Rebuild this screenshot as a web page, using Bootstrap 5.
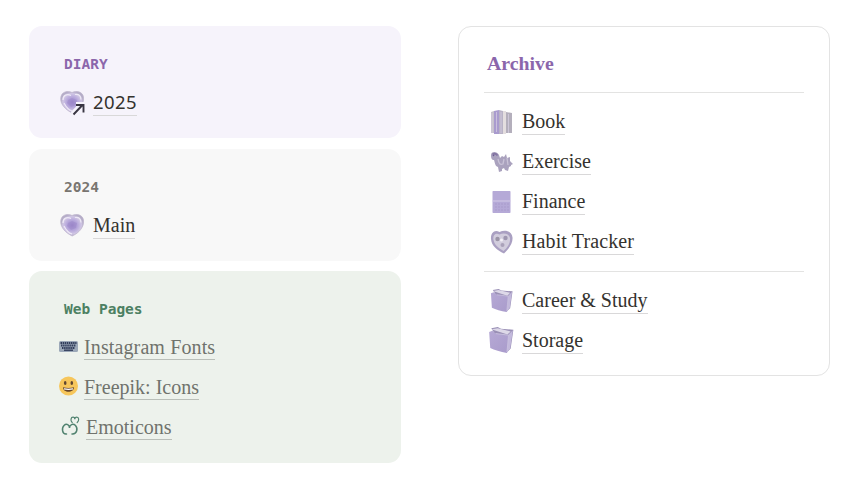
<!DOCTYPE html>
<html lang="en">
<head>
<meta charset="utf-8">
<meta name="viewport" content="width=device-width, initial-scale=1">
<title>Diary and archive</title>
<link href="https://cdn.jsdelivr.net/npm/bootstrap@5.3.0/dist/css/bootstrap.min.css" rel="stylesheet">
<style>
body{background:#fff;font-family:"Liberation Serif",serif;overflow:hidden}
.page{padding:26px 32px 0 29px;gap:57px}
.column{width:372px}
.panel{border-radius:13px;padding:24px 32px 0 35px}
.diary{background:#f6f3fb;height:112px}
.year{background:#f8f8f8;height:112px;margin-top:11px}
.web{background:#edf2ec;height:192px;margin-top:10px}
.heading{font:bold 14.5px/28px "DejaVu Sans Mono",monospace;margin:0 0 4px}
.diary .heading,.archive h2{color:#8b66ab}
.year .heading{color:#787570}
.web .heading{color:#4c8062}
.entry{height:40px;margin-left:-6px}
.entry svg{flex:none}
.label{font-size:20px;line-height:26px;color:#34322e;text-decoration:none;border-bottom:1px solid #d9d8d9;white-space:nowrap}
.web .label{line-height:24px;color:#70736d;border-color:#babfb9}
.label.year-label{font-family:"Noto Sans",sans-serif;font-size:18.5px;line-height:26px;letter-spacing:.45px}
.archive{height:350px;border:1px solid #e3e3e3;border-radius:13px;padding:21px 25px 0}
.archive h2{font:bold 19.8px/31px "Liberation Serif",serif;margin:0 0 13px 3px}
.rule{height:1px;background:#e3e3e2}
.rule-lower{margin-top:10px}
.archive .entry{margin-left:3px}
.icon-slot{width:35px;flex:none}
.roomy{letter-spacing:.12px}
</style>
</head>
<body>
<svg width="0" height="0" class="position-absolute" aria-hidden="true">
<defs>
<radialGradient id="gem"><stop offset="0" stop-color="#9c86c9"/><stop offset=".5" stop-color="#b8a9dc"/><stop offset=".8" stop-color="#d0c6e4"/><stop offset="1" stop-color="#b5adc8"/></radialGradient>
<linearGradient id="lilac" x2="1" y2="1"><stop stop-color="#b6a9d5"/><stop offset="1" stop-color="#a99bcb"/></linearGradient>
<symbol id="heart" viewBox="0 0 24 23"><path d="M12 1.500C8-.6 1 .3.700 7.500c-.2 6 5 11.500 11.500 14.500C19 19 24 13 23.600 7 23.300.3 16-.5 12 1.500Z" fill="url(#gem)" stroke="#bdb3cc" stroke-width=".7"/><path d="M3 9C3 4 7 2.500 11 4.500M15 3.500c4-1 6 2 6 5M4 12c2 4 5 7 8 8" fill="none" stroke="#eee9f6" stroke-width="1.200"/><path d="m8 9 4-2 5 2-1 5-5 2-4-4Z" fill="#9a86c8" opacity=".45"/></symbol>
<symbol id="folder" viewBox="0 0 26 26"><path d="m4 2 6-1 3 1.500 11.500 1L22 21l-4 4Z" fill="#9a90b6"/><path d="m4 3 6-1 12 3-3 3Z" fill="#ddd8e8"/><path d="m20 8 4-4-2.500 17-3.500 4Z" fill="#c3b9dc"/><path d="m2 5.500 3-1 3 2.500 12 1.500-1.500 16.500Q9 23.500 3 20.500Z" fill="url(#lilac)"/><path d="m8 7 12 1.500-1.500 16" fill="none" stroke="#cbc3df" stroke-width=".8"/></symbol>
</defs>
</svg>
<main class="page d-flex align-items-start">
<div class="column">
<section class="panel diary"><h2 class="heading">DIARY</h2>
<div class="entry d-flex align-items-center"><div class="icon-slot d-flex"><svg width="28" height="28" viewBox="0 0 28 28"><use href="#heart" x="2" y="3" width="24" height="23"/><path d="m14.500 26 9.500-10M18 16.500h7.500v8.500" fill="none" stroke="#f6f3fb" stroke-width="5"/><path d="m15.500 26.500 9-9.500M18 17h7.500v7.500" fill="none" stroke="#393642" stroke-width="1.900"/></svg></div><a class="label year-label" href="#">2025</a></div></section>
<section class="panel year"><h2 class="heading">2024</h2>
<div class="entry d-flex align-items-center"><div class="icon-slot d-flex"><svg width="28" height="28" viewBox="0 0 28 28"><use href="#heart" x="2" y="3" width="24" height="23"/></svg></div><a class="label" href="#">Main</a></div></section>
<section class="panel web"><h2 class="heading">Web Pages</h2>
<div class="entry d-flex align-items-center"><svg width="26" height="22" viewBox="0 0 26 22"><rect x="1" y="5" width="19" height="11" rx="1.500" fill="#9ba8b8"/><path d="M2.500 7h16M3 9.500h15M4 12h13" stroke="#303d5b" stroke-width="1.800" stroke-dasharray="1.500 .6"/><path d="M6 14.200h9" stroke="#303d5b" stroke-width="1.400"/></svg><a class="label roomy" href="#">Instagram Fonts</a></div>
<div class="entry d-flex align-items-center"><svg width="26" height="24" viewBox="0 0 26 24"><circle cx="10.500" cy="11" r="9.500" fill="#f6c65b"/><ellipse cx="7.200" cy="8" rx="1.300" ry="2" fill="#5e4530"/><ellipse cx="13.800" cy="8" rx="1.300" ry="2" fill="#5e4530"/><path d="M5 12.300q5.500 1.300 11 0c0 6-11 6-11 0Z" fill="#65462c"/><path d="M6 13.300q4.500.8 9 0v1.300q-4.500.8-9 0Z" fill="#fff"/></svg><a class="label" href="#">Freepik: Icons</a></div>
<div class="entry d-flex align-items-center"><svg width="28" height="26" viewBox="0 0 28 26"><g fill="none" stroke="#518370" stroke-width="1.500" stroke-linecap="round"><path d="M8.500 20C4 20.500 3.500 14 6 11.500c2.500-2.400 5.500-.8 5.500 2.500 0-3.300 3.500-5 6-2.500 2.700 3 1.500 9-3.500 8.500"/><path d="M14.200 8.500C12 6.500 13 3.200 15 3.200c1.200 0 1.800.8 1.800 2 0-1.200.8-2 2-2 2.200 0 2.600 3.500.4 5.300" stroke-width="1.200"/></g></svg><a class="label" href="#">Emoticons</a></div></section>
</div>
<section class="archive column"><h2>Archive</h2><div class="rule"></div>
<div class="pt-2">
<div class="entry d-flex align-items-center"><div class="icon-slot d-flex"><svg width="28" height="28" viewBox="0 0 28 28"><g transform="translate(0 1)"><path d="m4 4 3-1v22H4Z" fill="#c6c2cc"/><path d="m7 3 5-1v24H7Z" fill="#a99bce"/><path d="m12 2 4 1v23h-4Z" fill="#b9b3c6"/><path d="M16 3h3v23h-3Z" fill="#e4dedf"/><path d="m19 4 6 1v20h-6Z" fill="#b4afbc"/><path d="M5 5v20M9.500 4v20M14 4v21M21.500 6v19" stroke="#d8d0e4" stroke-width=".7"/></g></svg></div><a class="label" href="#">Book</a></div>
<div class="entry d-flex align-items-center"><div class="icon-slot d-flex"><svg width="28" height="28" viewBox="0 0 28 28"><path d="M4 8c0-4 6-4 8 0l1 3 2-2 2 1 2-3 1 4 3-1v4l3 3-2 1v1l-2 1-1 4-3-1-1-2-2 1v2l-3 1-1-5c-3-1-3-4-4-7-2 0-3-1-3-5Z" fill="#aaa2be"/><path d="M11 12c1 5 2 6 5 5l1-5M20 11l1 7" fill="none" stroke="#c9c2d7" stroke-width="1.300"/><path d="M5.500 7.500q3-2 5 1" fill="none" stroke="#8678a4" stroke-width="2"/><circle cx="6.500" cy="8.500" r=".8" fill="#6b5c94"/></svg></div><a class="label" href="#">Exercise</a></div>
<div class="entry d-flex align-items-center"><div class="icon-slot d-flex"><svg width="28" height="28" viewBox="0 0 28 28"><rect x="5.500" y="4" width="18" height="22" rx=".7" fill="#b5a9d7"/><path d="M5.500 14h18" stroke="#d4cbe7"/><path d="M8 17h14M8 20h14M8 23h14" stroke="#a99ccc" stroke-width="1.200" stroke-dasharray="2 1"/></svg></div><a class="label" href="#">Finance</a></div>
<div class="entry d-flex align-items-center"><div class="icon-slot d-flex"><svg width="28" height="28" viewBox="0 0 28 28"><g transform="translate(.5 1)"><path d="M12 4C7 1 3 5 3.500 11c.5 7 6 11 13 14.500 5-5 9-10 8.500-16-.8-7-8-8-13-5.500Z" fill="#aaa0c2"/><path d="M12 6.500C8 4.500 5 7 6 12c1 5 5 8 10 11 5-4 7-9 6.500-13-1-5-7-5.500-10.500-3.500Z" fill="#d2cddd"/><circle cx="10" cy="11" r="2.200" fill="#9b94a7"/><circle cx="18" cy="10" r="2.200" fill="#9e96b0"/><circle cx="15" cy="17" r="2" fill="#aaa2b9"/><circle cx="14" cy="12" r="1.500" fill="#f4f1f7"/></g></svg></div><a class="label roomy" href="#">Habit Tracker</a></div>
</div>
<div class="rule rule-lower"></div>
<div class="pt-2">
<div class="entry d-flex align-items-center"><div class="icon-slot d-flex"><svg width="28" height="28" viewBox="0 0 28 28"><use href="#folder" x="2" y="2" width="25" height="25"/></svg></div><a class="label" href="#">Career &amp; Study</a></div>
<div class="entry d-flex align-items-center"><div class="icon-slot d-flex"><svg width="28" height="28" viewBox="0 0 28 28"><use href="#folder" x="0" y="0" width="28" height="28"/></svg></div><a class="label" href="#">Storage</a></div>
</div></section>
</main>
<script src="https://cdn.jsdelivr.net/npm/bootstrap@5.3.0/dist/js/bootstrap.bundle.min.js"></script>
</body>
</html>
